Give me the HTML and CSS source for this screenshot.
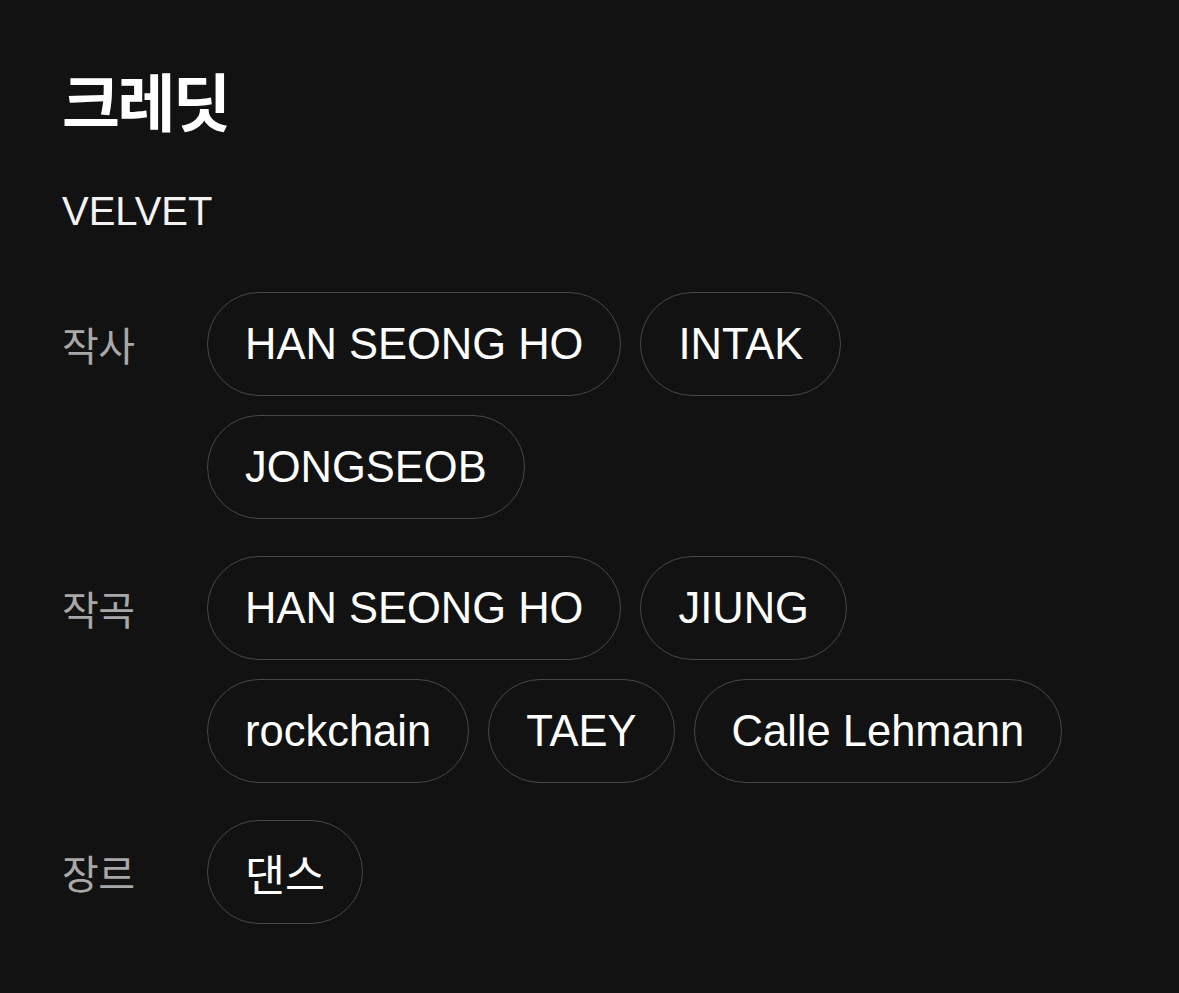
FILE: index.html
```html
<!DOCTYPE html>
<html lang="ko">
<head>
<meta charset="utf-8">
<title>크레딧</title>
<link rel="stylesheet" href="styles.css">
</head>
<body>
<main class="page">
  <h1 class="title">크레딧</h1>
  <p class="artist">VELVET</p>
  <div class="credits">
    <div class="label">작사</div>
    <div class="chips">
      <span class="chip">HAN SEONG HO</span>
      <span class="chip">INTAK</span>
      <span class="chip">JONGSEOB</span>
    </div>
    <div class="label">작곡</div>
    <div class="chips">
      <span class="chip">HAN SEONG HO</span>
      <span class="chip">JIUNG</span>
      <span class="chip">rockchain</span>
      <span class="chip">TAEY</span>
      <span class="chip">Calle Lehmann</span>
    </div>
    <div class="label">장르</div>
    <div class="chips">
      <span class="chip">댄스</span>
    </div>
  </div>
</main>
</body>
</html>
```
FILE: styles.css
```css
html, body {
  margin: 0;
  padding: 0;
  background: #121212;
}
body {
  font-family: "Liberation Sans", "Noto Sans CJK KR", sans-serif;
  color: #ffffff;
}
.page {
  padding: 59px 79px 40px 62px;
}
.title {
  margin: 0;
  font-family: "Noto Sans CJK KR", sans-serif;
  font-weight: 700;
  font-size: 63px;
  line-height: 80px;
  letter-spacing: -2.5px;
  color: #ffffff;
}
.artist {
  margin: 48px 0 0;
  font-size: 40px;
  line-height: 48px;
  color: #f2f2f2;
}
.credits {
  margin-top: 57px;
  display: grid;
  grid-template-columns: 145px 1fr;
  row-gap: 37px;
}
.label {
  height: 104px;
  display: flex;
  align-items: center;
  font-family: "Noto Sans CJK KR", sans-serif;
  font-size: 40px;
  letter-spacing: -0.5px;
  color: #a8a8a8;
}
.chips {
  display: flex;
  flex-wrap: wrap;
  gap: 19px;
}
.chip {
  box-sizing: border-box;
  height: 104px;
  display: inline-flex;
  align-items: center;
  padding: 0 37px;
  border: 1.5px solid #474747;
  border-radius: 52px;
  font-size: 43.5px;
  color: #ffffff;
  white-space: nowrap;
}
```
